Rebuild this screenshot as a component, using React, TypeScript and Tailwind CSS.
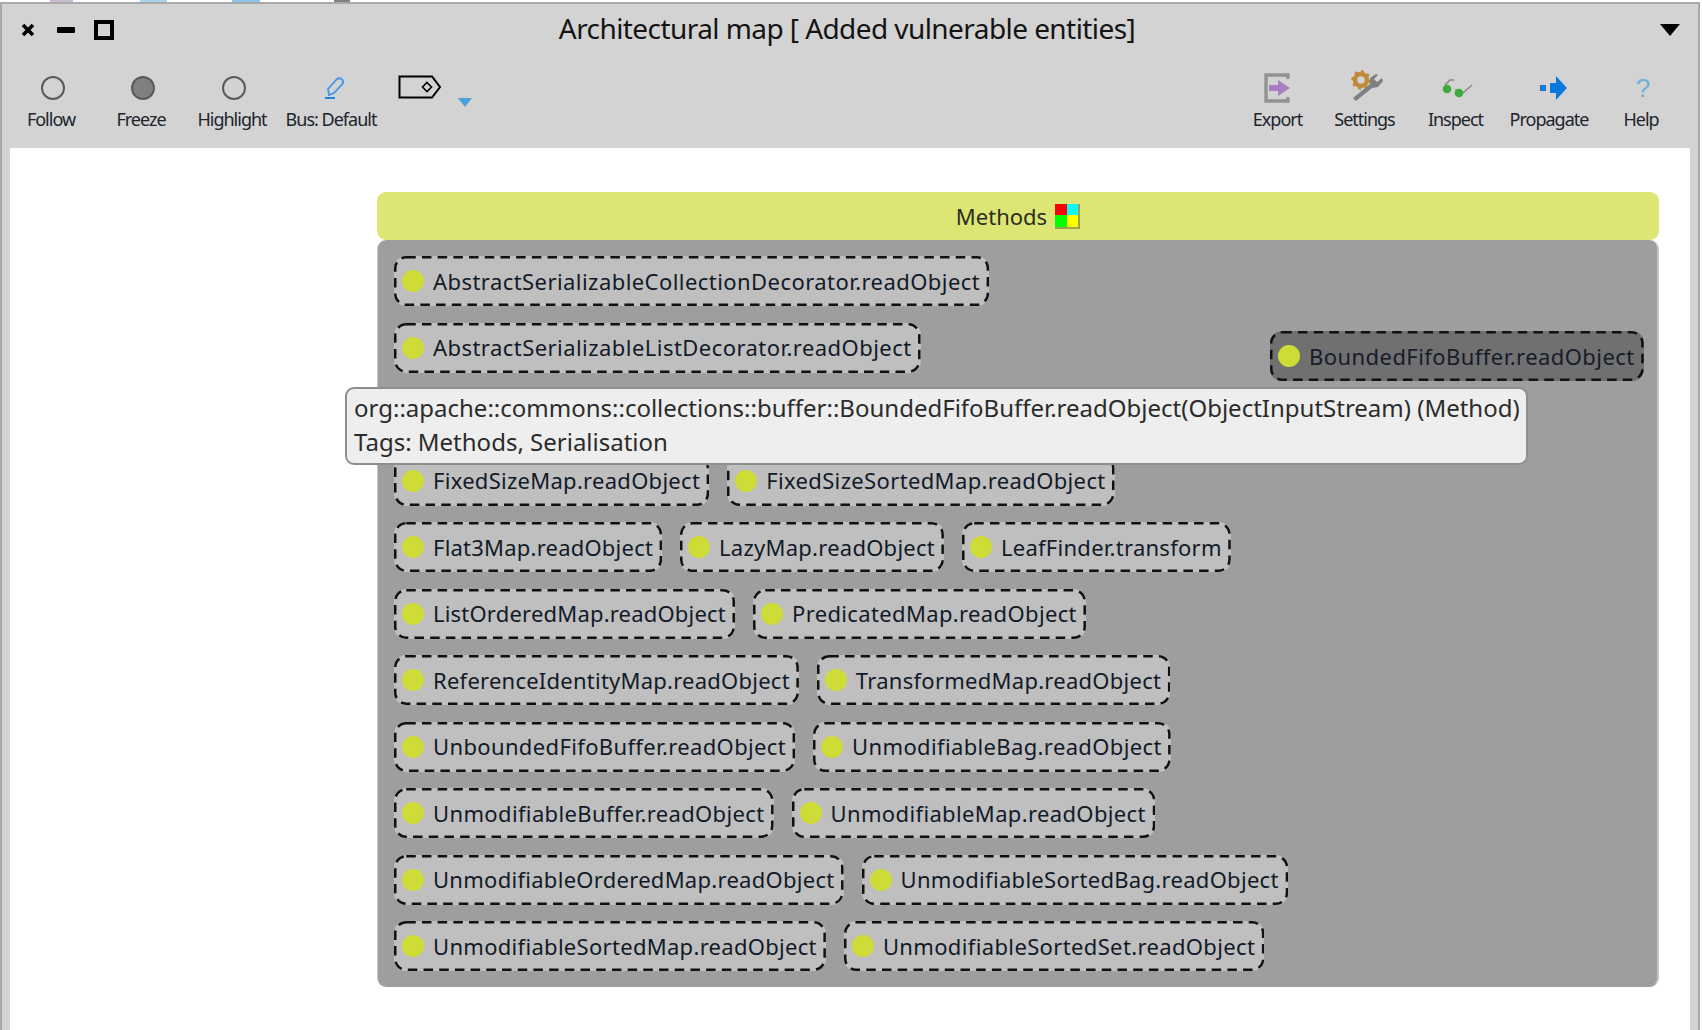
import React from "react";

const rows: string[][] = [
  ["AbstractSerializableCollectionDecorator.readObject"],
  ["AbstractSerializableListDecorator.readObject"],
  [],
  ["FixedSizeMap.readObject", "FixedSizeSortedMap.readObject"],
  ["Flat3Map.readObject", "LazyMap.readObject", "LeafFinder.transform"],
  ["ListOrderedMap.readObject", "PredicatedMap.readObject"],
  ["ReferenceIdentityMap.readObject", "TransformedMap.readObject"],
  ["UnboundedFifoBuffer.readObject", "UnmodifiableBag.readObject"],
  ["UnmodifiableBuffer.readObject", "UnmodifiableMap.readObject"],
  ["UnmodifiableOrderedMap.readObject", "UnmodifiableSortedBag.readObject"],
  ["UnmodifiableSortedMap.readObject", "UnmodifiableSortedSet.readObject"],
];

const spacing: Record<string, string> = {
  "AbstractSerializableCollectionDecorator.readObject": "tracking-[0.44px]",
  "AbstractSerializableListDecorator.readObject": "tracking-[0.45px]",
  "BoundedFifoBuffer.readObject": "tracking-[0.44px]",
  "FixedSizeMap.readObject": "tracking-[0.28px]",
  "Flat3Map.readObject": "tracking-[0.22px]",
  "LazyMap.readObject": "tracking-[0.25px]",
  "LeafFinder.transform": "tracking-[0.26px]",
  "ListOrderedMap.readObject": "tracking-[0.2px]",
  "ReferenceIdentityMap.readObject": "tracking-[0.24px]",
  "TransformedMap.readObject": "tracking-[0.27px]",
  "UnmodifiableOrderedMap.readObject": "tracking-[0.28px]",
  "UnmodifiableSortedBag.readObject": "tracking-[0.3px]",
  "UnmodifiableSortedMap.readObject": "tracking-[0.3px]",
};

function Dashes() {
  return (
    <svg className="absolute inset-0 w-full h-full pointer-events-none">
      <rect
        x="1.25"
        y="1.25"
        rx="11"
        className="[width:calc(100%-2.5px)] [height:calc(100%-2.5px)]"
        fill="none"
        stroke="#111"
        strokeWidth="2.5"
        strokeDasharray="9.5 6.2"
      />
    </svg>
  );
}

function Chip({ label, dark }: { label: string; dark?: boolean }) {
  return (
    <div
      className={`relative h-[50px] flex items-center pl-[8px] pr-[9px] gap-[9px] rounded-[12px] ${
        dark ? "bg-[#707070]" : "bg-[#bfbfbf]"
      }`}
    >
      <span className="w-[22px] h-[22px] rounded-full bg-[#cfdc37] shrink-0" />
      <span
        className={`text-[22px] leading-none whitespace-nowrap -mt-[1px] ${spacing[label] ?? "tracking-[0.36px]"} ${
          dark ? "text-[#161c2a]" : "text-[#121a28]"
        }`}
      >
        {label}
      </span>
      <Dashes />
    </div>
  );
}

function ToolItem({ width, label, shift, children }: { width: string; label: string; shift?: string; children: React.ReactNode }) {
  return (
    <div className={`flex flex-col items-center ${width}`}>
      <div className={`h-[36px] flex items-center justify-center ${shift ?? ""}`}>{children}</div>
      <span className="text-[18px] leading-[24px] tracking-[-1px] text-[#20242c] whitespace-nowrap mt-[1px]">
        {label}
      </span>
    </div>
  );
}

function Circle({ filled }: { filled?: boolean }) {
  return (
    <span
      className={`block w-[24px] h-[24px] rounded-full border-2 border-[#5a5a5a] -mt-[1px] ${
        filled ? "bg-[#808080]" : "bg-transparent"
      }`}
    />
  );
}

export default function App() {
  return (
    <div className="w-[1702px] h-[1030px] overflow-hidden flex flex-col bg-white font-['Noto_Sans',sans-serif]">
      <div className="h-[2px] flex shrink-0">
        <span className="ml-[50px] w-[23px] bg-[#c9bcd2]" />
        <span className="ml-[67px] w-[27px] bg-[#a9d4ee]" />
        <span className="ml-[65px] w-[28px] bg-[#8cc2e8]" />
        <span className="ml-[74px] w-[16px] bg-[#808080]" />
      </div>
      <div className="w-[1700px] flex-1 min-h-0 flex flex-col bg-[#d3d3d3] border-t-2 border-l-2 border-r-2 border-[#a9a9a9]">
        {/* title bar */}
        <div className="relative h-[52px] shrink-0 flex items-center justify-center pr-[6px]">
          <div className="absolute left-[19px] top-[16px] flex items-center">
            <svg width="14" height="14" viewBox="0 0 14 14">
              <path d="M2 2 L12 12 M12 2 L2 12" stroke="#000" strokeWidth="3.6" />
            </svg>
            <span className="ml-[22px] w-[18px] h-[6px] bg-black rounded-[1px]" />
            <span className="ml-[19px] w-[20px] h-[20px] border-[4px] border-black" />
          </div>
          <span className="text-[28px] leading-none tracking-[-0.57px] text-[#141414] whitespace-nowrap -mt-[4px]">
            Architectural map [ Added vulnerable entities]
          </span>
          <svg className="absolute left-[1658px] top-[20px]" width="20" height="12" viewBox="0 0 20 12">
            <path d="M0 0 H20 L10 12 Z" fill="#000" />
          </svg>
        </div>
        {/* toolbar */}
        <div className="h-[92px] shrink-0 pt-[14px] flex items-start pl-[4px] pr-[11px]">
          <ToolItem width="w-[90px]" label="Follow" shift="ml-[4px]"><Circle /></ToolItem>
          <ToolItem width="w-[90px]" label="Freeze" shift="ml-[4px]"><Circle filled /></ToolItem>
          <ToolItem width="w-[92px]" label="Highlight" shift="ml-[4px]"><Circle /></ToolItem>
          <ToolItem width="w-[106px]" label="Bus: Default" shift="ml-[8px]">
            <svg width="26" height="26" viewBox="0 0 26 26" className="-mt-[2px] -ml-[2px]">
              <path d="M8 21 L7 15 L16 5 Q19 3 21.5 6 Q23 8.5 21 10.5 L13 19 Z" fill="none" stroke="#3f97e6" strokeWidth="1.8" />
              <path d="M4 24 H14" stroke="#1a86e0" strokeWidth="2" />
            </svg>
          </ToolItem>
          <svg width="44" height="24" viewBox="0 0 44 24" className="ml-[14px] mt-[5px] shrink-0">
            <path d="M1.5 1.5 H34 L42 12 L34 22.5 H1.5 Z" fill="none" stroke="#000" strokeWidth="2" />
            <path d="M29 7.5 L33.5 12 L29 16.5 L24.5 12 Z" fill="none" stroke="#000" strokeWidth="1.6" />
          </svg>
          <svg width="14" height="9" viewBox="0 0 14 9" className="ml-[16px] mt-[28px] shrink-0">
            <path d="M0 0 H14 L7 9 Z" fill="#4aa0d8" />
          </svg>
          <div className="flex-1" />
          <ToolItem width="w-[87px]" label="Export" shift="-ml-[2px]">
            <svg width="28" height="30" viewBox="0 0 28 30">
              <path d="M25 6 V2 H3 V28 H25 V24" fill="none" stroke="#929292" strokeWidth="3.4" />
              <path d="M6 12 H15 V7 L27 15 L15 23 V18 H6 Z" fill="#a97fc0" />
            </svg>
          </ToolItem>
          <ToolItem width="w-[87px]" label="Settings" shift="ml-[6px]">
            <svg width="34" height="34" viewBox="0 0 34 34" className="-mt-[2px]">
              <circle cx="10" cy="10" r="6" fill="none" stroke="#c08a3c" strokeWidth="4.5" />
              <circle cx="10" cy="10" r="8.6" fill="none" stroke="#c08a3c" strokeWidth="2.2" strokeDasharray="3 3.7" />
              <path d="M5 31 L2 28 L19 14 L19 8 L25 4 L27 5 L23 9 L26 12 L31 8 L32 11 L27 17 L21 18 Z" fill="#808080" />
            </svg>
          </ToolItem>
          <ToolItem width="w-[95px]" label="Inspect" shift="ml-[4px]">
            <svg width="34" height="20" viewBox="0 0 34 20">
              <path d="M4 7 L9 2 L13 2 M14 12 Q18 12 20 14 M22 15 L31 7" fill="none" stroke="#8a8a8a" strokeWidth="1.6" />
              <circle cx="6" cy="11" r="4.3" fill="#3cab3c" />
              <circle cx="18" cy="15" r="4.3" fill="#3cab3c" />
            </svg>
          </ToolItem>
          <ToolItem width="w-[92px]" label="Propagate" shift="ml-[4px]">
            <svg width="28" height="24" viewBox="0 0 28 24" className="ml-[6px]">
              <rect x="0" y="9" width="6" height="6" fill="#0a78dc" />
              <path d="M10 7 H16 V0 L27 12 L16 24 V17 H10 Z" fill="#0a78dc" />
            </svg>
          </ToolItem>
          <ToolItem width="w-[92px]" label="Help" shift="ml-[4px]">
            <span className="font-['Liberation_Sans',sans-serif] text-[26px] leading-none text-[#6fb0d6] font-light">?</span>
          </ToolItem>
        </div>
        {/* canvas */}
        <div className="relative flex-1 min-h-0 ml-[8px] mr-[8px] bg-white pl-[367px] pt-[44px]">
          <div className="w-[1282px]">
            <div className="h-[48px] rounded-[9px] bg-[#dde575] flex items-center justify-center gap-[7px] text-[22px] text-[#2a2e1c]">
              <span>Methods</span>
              <span className="w-[25px] h-[25px] ml-[1px] grid grid-cols-2 grid-rows-2 border-r-[2px] border-b-[2px] border-[#9aa24e]">
                <span className="bg-[#ff0000]" />
                <span className="bg-[#00ffff]" />
                <span className="bg-[#00ff00]" />
                <span className="bg-[#ffff00]" />
              </span>
            </div>
            <div className="relative h-[747px] rounded-[9px] bg-[#9e9e9e] border-l border-r-2 border-[#c6c6c6] pt-[16px] pl-[16px] flex flex-col gap-y-[16.5px]">
              {rows.map((row, i) => (
                <div key={i} className="h-[50px] flex gap-[18px] items-start">
                  {row.map((label) => (
                    <Chip key={label} label={label} />
                  ))}
                </div>
              ))}
              <div className="absolute left-[892px] top-[91px]">
                <Chip label="BoundedFifoBuffer.readObject" dark />
              </div>
            </div>
          </div>
          {/* tooltip */}
          <div className="absolute left-[335px] top-[239px] w-[1183px] h-[78px] rounded-[9px] bg-[#eeeeee] border-2 border-[#8e8e8e] pl-[7px] pt-[2px] text-[24px] leading-[33.5px] text-[#2b2b2b] whitespace-nowrap">
            <div>org::apache::commons::collections::buffer::BoundedFifoBuffer.readObject(ObjectInputStream) (Method)</div>
            <div>Tags: Methods, Serialisation</div>
          </div>
        </div>
      </div>
    </div>
  );
}
